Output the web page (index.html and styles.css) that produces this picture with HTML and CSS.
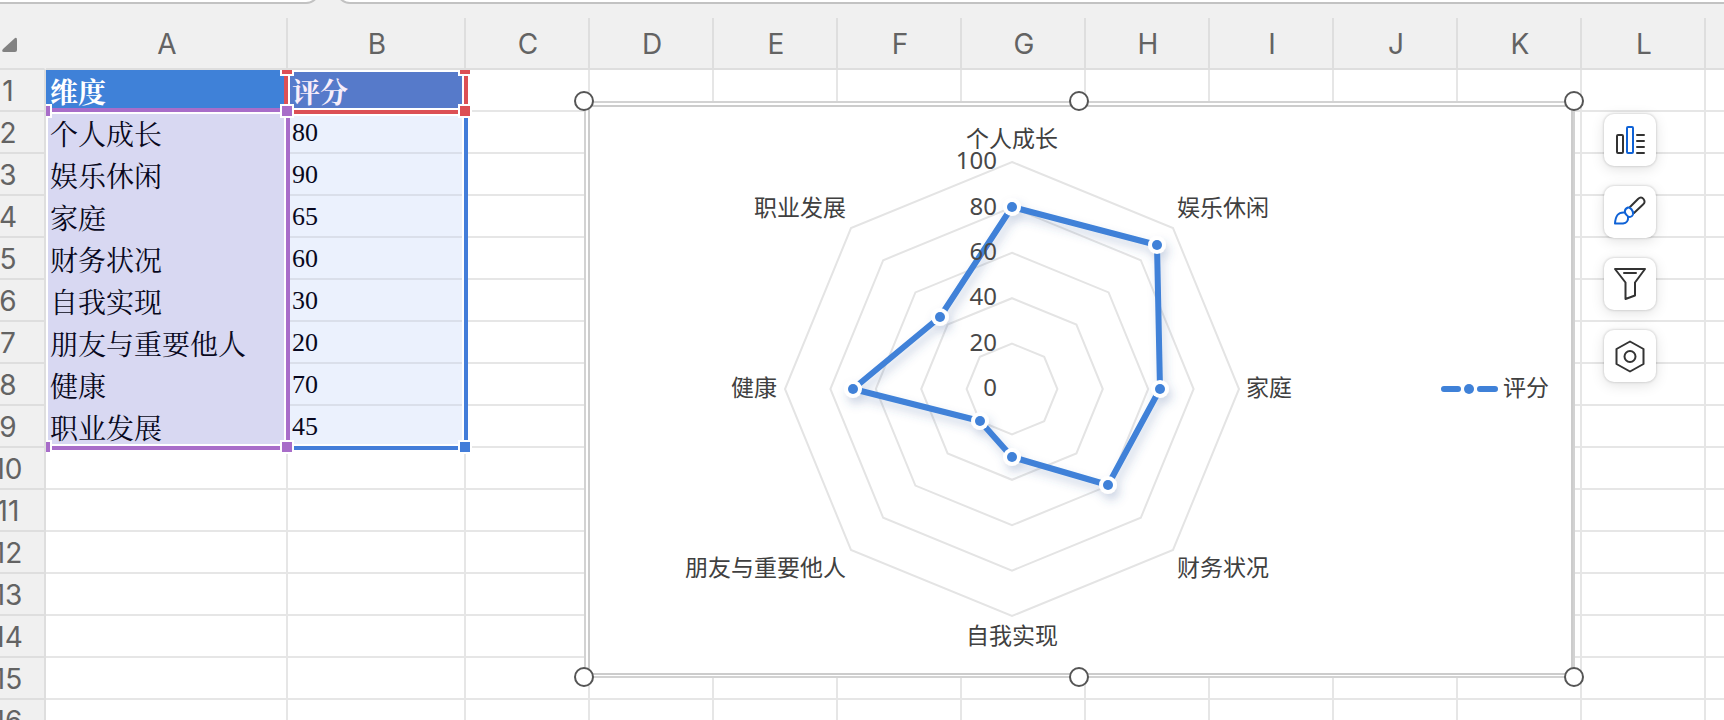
FILE: index.html
```html
<!DOCTYPE html>
<html lang="zh-CN">
<head>
<meta charset="utf-8">
<meta name="viewport" content="width=device-width, initial-scale=1">
<title>评分</title>
<link rel="stylesheet" href="styles.css">
</head>
<body>
<div class="formula-bar">
  <input class="name-box" type="text" aria-label="名称框">
  <input class="formula-box" type="text" aria-label="编辑栏">
</div>
<main class="sheet">
  <table class="grid">
    <colgroup>
      <col class="col-head"><col class="col-a"><col class="col-b"><col class="col-c">
      <col class="col-std"><col class="col-std"><col class="col-std"><col class="col-std"><col class="col-std">
      <col class="col-std"><col class="col-std"><col class="col-std"><col class="col-std"><col>
    </colgroup>
    <thead>
      <tr>
        <th class="corner"><button class="select-all" type="button" aria-label="全选"><svg width="16" height="16" viewBox="0 0 16 16"><path d="M13 1Q15 0 15 3V13Q15 15 13 15H2Q-1 15 1 12Z" fill="#828282"/></svg></button></th>
        <th scope="col">A</th><th scope="col">B</th><th scope="col">C</th><th scope="col">D</th><th scope="col">E</th><th scope="col">F</th><th scope="col">G</th><th scope="col">H</th><th scope="col">I</th><th scope="col">J</th><th scope="col">K</th><th scope="col">L</th><th class="last"></th>
      </tr>
    </thead>
    <tbody>
      <tr class="title-row"><th scope="row">1</th><td class="dim">维度</td><td class="score">评分</td><td></td><td></td><td></td><td></td><td></td><td></td><td></td><td></td><td></td><td></td><td></td></tr>
      <tr><th scope="row">2</th><td class="dim">个人成长</td><td class="score">80</td><td></td><td></td><td></td><td></td><td></td><td></td><td></td><td></td><td></td><td></td><td></td></tr>
      <tr><th scope="row">3</th><td class="dim">娱乐休闲</td><td class="score">90</td><td></td><td></td><td></td><td></td><td></td><td></td><td></td><td></td><td></td><td></td><td></td></tr>
      <tr><th scope="row">4</th><td class="dim">家庭</td><td class="score">65</td><td></td><td></td><td></td><td></td><td></td><td></td><td></td><td></td><td></td><td></td><td></td></tr>
      <tr><th scope="row">5</th><td class="dim">财务状况</td><td class="score">60</td><td></td><td></td><td></td><td></td><td></td><td></td><td></td><td></td><td></td><td></td><td></td></tr>
      <tr><th scope="row">6</th><td class="dim">自我实现</td><td class="score">30</td><td></td><td></td><td></td><td></td><td></td><td></td><td></td><td></td><td></td><td></td><td></td></tr>
      <tr><th scope="row">7</th><td class="dim">朋友与重要他人</td><td class="score">20</td><td></td><td></td><td></td><td></td><td></td><td></td><td></td><td></td><td></td><td></td><td></td></tr>
      <tr><th scope="row">8</th><td class="dim">健康</td><td class="score">70</td><td></td><td></td><td></td><td></td><td></td><td></td><td></td><td></td><td></td><td></td><td></td></tr>
      <tr><th scope="row">9</th><td class="dim">职业发展</td><td class="score">45</td><td></td><td></td><td></td><td></td><td></td><td></td><td></td><td></td><td></td><td></td><td></td></tr>
      <tr><th scope="row">10</th><td></td><td></td><td></td><td></td><td></td><td></td><td></td><td></td><td></td><td></td><td></td><td></td><td></td></tr>
      <tr><th scope="row">11</th><td></td><td></td><td></td><td></td><td></td><td></td><td></td><td></td><td></td><td></td><td></td><td></td><td></td></tr>
      <tr><th scope="row">12</th><td></td><td></td><td></td><td></td><td></td><td></td><td></td><td></td><td></td><td></td><td></td><td></td><td></td></tr>
      <tr><th scope="row">13</th><td></td><td></td><td></td><td></td><td></td><td></td><td></td><td></td><td></td><td></td><td></td><td></td><td></td></tr>
      <tr><th scope="row">14</th><td></td><td></td><td></td><td></td><td></td><td></td><td></td><td></td><td></td><td></td><td></td><td></td><td></td></tr>
      <tr><th scope="row">15</th><td></td><td></td><td></td><td></td><td></td><td></td><td></td><td></td><td></td><td></td><td></td><td></td><td></td></tr>
      <tr><th scope="row">16</th><td></td><td></td><td></td><td></td><td></td><td></td><td></td><td></td><td></td><td></td><td></td><td></td><td></td></tr>
    </tbody>
  </table>

  <!-- Source range outlines: labels (purple), series name (red), values (blue) -->
  <svg class="ranges" width="428" height="386" viewBox="0 0 428 386" shape-rendering="crispEdges" aria-hidden="true">
    <path fill="#fff" d="M0 42h2v334h-2zM0 42h246v2h-246zM238 44h2v330h-2zM0 374h422v2h-422zM242 0h176v2h-176zM242 2h2v36h-2zM416 2h2v374h-2zM242 38h176v2h-176zM244 44h174v2h-174z"/>
    <path fill="#dc5055" d="M238 4h4v34h-4zM418 4h4v34h-4zM246 40h168v4h-168z"/>
    <path fill="#a86dc9" d="M0 38h236v4h-236zM240 44h4v330h-4zM0 376h236v4h-236z"/>
    <path fill="#437dd9" d="M418 46h4v328h-4zM246 376h168v4h-168z"/>
    <path fill="#fff" d="M234 0h14v6h-14zM412 0h14v6h-14zM0 34h6v14h-6zM0 370h6v14h-6zM234 34h14v14h-14zM412 34h14v14h-14zM234 370h14v14h-14zM412 370h14v14h-14z"/>
    <path fill="#dc5055" d="M236 0h10v4h-10zM414 0h10v4h-10zM414 36h10v10h-10z"/>
    <path fill="#a86dc9" d="M0 36h4v10h-4zM0 372h4v10h-4zM236 36h10v10h-10zM236 372h10v10h-10z"/>
    <path fill="#437dd9" d="M414 372h10v10h-10z"/>
  </svg>

  <figure class="chart">
    <svg class="plot" viewBox="0 0 981 566" role="img" aria-label="评分">
      <defs>
        <filter id="soft" x="-20%" y="-20%" width="140%" height="150%"><feDropShadow dx="3" dy="6" stdDeviation="5" flood-color="#3c5a96" flood-opacity="0.25"/></filter>
        <g id="dot"><circle r="9" fill="#fff"/><circle r="5" fill="#3f81d8"/></g>
        <path id="ring" d="M0-227 161-161 227 0 161 161 0 227-161 161-227 0-161-161Z" vector-effect="non-scaling-stroke"/>
      </defs>
      <g transform="translate(422 282)">
        <g class="rings">
          <use href="#ring"/><use href="#ring" transform="scale(.8)"/><use href="#ring" transform="scale(.6)"/><use href="#ring" transform="scale(.4)"/><use href="#ring" transform="scale(.2)"/>
        </g>
        <g filter="url(#soft)">
          <path class="series" d="M0-182 145-144 148 0 96 96 0 68-32 32-159 0-72-72Z"/>
          <use href="#dot" x="0" y="-182"/><use href="#dot" x="145" y="-144"/><use href="#dot" x="148" y="0"/><use href="#dot" x="96" y="96"/>
          <use href="#dot" x="0" y="68"/><use href="#dot" x="-32" y="32"/><use href="#dot" x="-159" y="0"/><use href="#dot" x="-72" y="-72"/>
        </g>
        <g class="axis">
          <text x="-15" y="-220">100</text><text x="-15" y="-174">80</text><text x="-15" y="-129">60</text>
          <text x="-15" y="-84">40</text><text x="-15" y="-38">20</text><text x="-15" y="7">0</text>
        </g>
        <g class="label">
          <g text-anchor="middle"><text x="0" y="-242">个人成长</text><text x="0" y="255">自我实现</text></g>
          <text x="165" y="-173">娱乐休闲</text><text x="234" y="7">家庭</text><text x="165" y="187">财务状况</text><text x="491" y="7">评分</text>
          <g text-anchor="end"><text x="-166" y="187">朋友与重要他人</text><text x="-235" y="7">健康</text><text x="-166" y="-173">职业发展</text></g>
        </g>
        <path class="series" d="M432 0H446M468 0H483"/>
        <circle cx="457" cy="0" r="5" fill="#3f81d8"/>
        <path d="M450-4v8M464-4v8" stroke="#fff" stroke-width="2"/>
      </g>
    </svg>
    <span class="handle top left"></span><span class="handle top mid"></span><span class="handle top right"></span>
    <span class="handle bottom left"></span><span class="handle bottom mid"></span><span class="handle bottom right"></span>
  </figure>

  <div class="chart-tools">
    <button type="button" aria-label="图表元素"><svg viewBox="0 0 52 52"><rect x="13" y="21" width="6" height="18" rx="1"/><rect class="accent" x="23" y="13" width="6" height="26" rx="1"/><path d="M33 21h7M33 27h7M33 33h7M33 39h7"/></svg></button>
    <button type="button" aria-label="图表样式"><svg viewBox="0 0 52 52"><path d="M26 21 34 13C36 11 38 11 39.500 13S41 17 39 18.500L30 27"/><path class="accent" d="M24 21.500C26 21 30 25 29 28.500 28 31 25 32 23 29.500 20 27 20 23 24 21.500Z"/><path class="accent" d="M20.500 26.500C14 26 11.500 30 11 37.500H19C22.500 37 24.500 34.500 24 31"/></svg></button>
    <button type="button" aria-label="图表筛选"><svg viewBox="0 0 52 52"><path d="M11 11H41L31 24.500V37.500L21.500 41V24.500ZM20 15H32"/></svg></button>
    <button type="button" aria-label="图表设置"><svg viewBox="0 0 52 52"><path d="M26 11.500 39.500 19V34L26 41.500 12.500 34V19Z"/><circle cx="26" cy="26.500" r="5.500"/></svg></button>
  </div>
</main>
</body>
</html>
```

FILE: styles.css
```css
* {
  box-sizing: border-box;
}

body {
  margin: 0;
  height: 100vh;
  overflow: hidden;
  background: #f0f0f0;
  font-family: Inter, "Liberation Sans", "Noto Sans CJK SC", sans-serif;
}

.formula-bar {
  display: flex;
  align-items: flex-end;
  gap: 16px;
  height: 4px;
  margin: 0 -20px 14px;
}

.formula-bar input {
  flex: none;
  height: 40px;
  padding: 0 16px;
  border: 2px solid #c2c2c2;
  border-radius: 14px;
  background: #fff;
  font-size: 24px;
}

.formula-bar .name-box {
  width: 340px;
}

.formula-bar .formula-box {
  flex: 1;
}

.sheet {
  position: relative;
}

.grid {
  width: calc(100% + 28px);
  margin-left: -28px;
  table-layout: fixed;
  border-collapse: separate;
  border-spacing: 0;
  background: #fff;
}

.col-head { width: 74px; }
.col-a { width: 242px; }
.col-b { width: 178px; }
.col-c { width: 124px; }
.col-std { width: 124px; }

.grid th,
.grid td {
  height: 42px;
  padding: 2px 0 0;
  border: solid #e6e6e6;
  border-width: 0 2px 2px 0;
  line-height: 38px;
}

.grid th {
  background: #f0f0f0;
  border-color: #dedede;
  color: #636363;
  font-size: 28px;
  font-weight: 400;
}

.grid thead th {
  height: 52px;
  padding-left: 2px;
  line-height: 48px;
}

.grid thead .corner {
  padding: 0;
  border-color: #f0f0f0 #f0f0f0 #dedede;
}

.grid th.last,
.grid td:last-child {
  border-right-width: 0;
}

.select-all {
  display: block;
  margin: 4px 0 0 30px;
  padding: 0;
  border: 0;
  background: none;
  line-height: 0;
}

.grid td {
  color: #080820;
  white-space: nowrap;
  overflow: hidden;
}

.grid .dim {
  padding-left: 4px;
  border-color: #d8d8f2;
  background: #d8d8f2;
  font-family: "Noto Serif CJK SC", "Noto Sans CJK SC", serif;
  font-size: 28px;
}

.grid .score {
  padding-left: 4px;
  border-color: #dadfea;
  background: #ebf1fd;
  font-family: "Liberation Serif", "Noto Serif CJK SC", "Noto Sans CJK SC", serif;
  font-size: 26px;
}

.title-row .dim,
.title-row .score {
  color: #fff;
  font-family: "Noto Serif CJK SC", "Noto Sans CJK SC", serif;
  font-size: 28px;
  font-weight: 700;
}

.grid .title-row .score {
  border-color: #567aca;
  background: #567aca;
  color: #f8eefa;
  font-family: "Noto Serif CJK SC", "Noto Sans CJK SC", serif;
  font-size: 28px;
}

.grid .title-row .dim {
  border-color: #3f81d8;
  background: #3f81d8;
  color: #fff;
}

.ranges {
  position: absolute;
  left: 46px;
  top: 52px;
}

.chart {
  position: absolute;
  left: 584px;
  top: 83px;
  width: 991px;
  margin: 0;
  padding: 2px 0 1px 2px;
  border: 2px solid #d2d2d2;
  background: #fff;
}

.plot {
  display: block;
  width: 100%;
  border: 2px solid #cccccc;
  background: #fff;
}

.rings {
  fill: none;
  stroke: #e4e4e4;
  stroke-width: 2;
}

.series {
  fill: none;
  stroke: #3f81d8;
  stroke-width: 6;
  stroke-linecap: round;
  stroke-linejoin: round;
}

.axis {
  fill: #484848;
  font-family: "Noto Sans", sans-serif;
  font-size: 24px;
  text-anchor: end;
}

.label {
  fill: #404040;
  font-family: "Noto Sans CJK SC", sans-serif;
  font-size: 23px;
}

.handle {
  position: absolute;
  width: 20px;
  height: 20px;
  border: 2px solid #555;
  border-radius: 50%;
  background: #fff;
}

.handle.top { top: -12px; }
.handle.bottom { bottom: -11px; }
.handle.left { left: -12px; }
.handle.mid { left: calc(50% - 11px); }
.handle.right { right: -11px; }

.chart-tools {
  position: absolute;
  left: 1604px;
  top: 96px;
  display: grid;
  gap: 20px;
}

.chart-tools button {
  width: 52px;
  height: 52px;
  padding: 0;
  border: 0;
  border-radius: 10px;
  background: #fff;
  box-shadow: 0 0 2px 1px rgba(0, 0, 0, .1), 0 3px 14px rgba(0, 0, 0, .12);
}

.chart-tools svg {
  display: block;
  fill: none;
  stroke: #333;
  stroke-width: 2;
  stroke-linecap: round;
  stroke-linejoin: round;
}

.chart-tools .accent {
  stroke: #0f62d6;
}
```
